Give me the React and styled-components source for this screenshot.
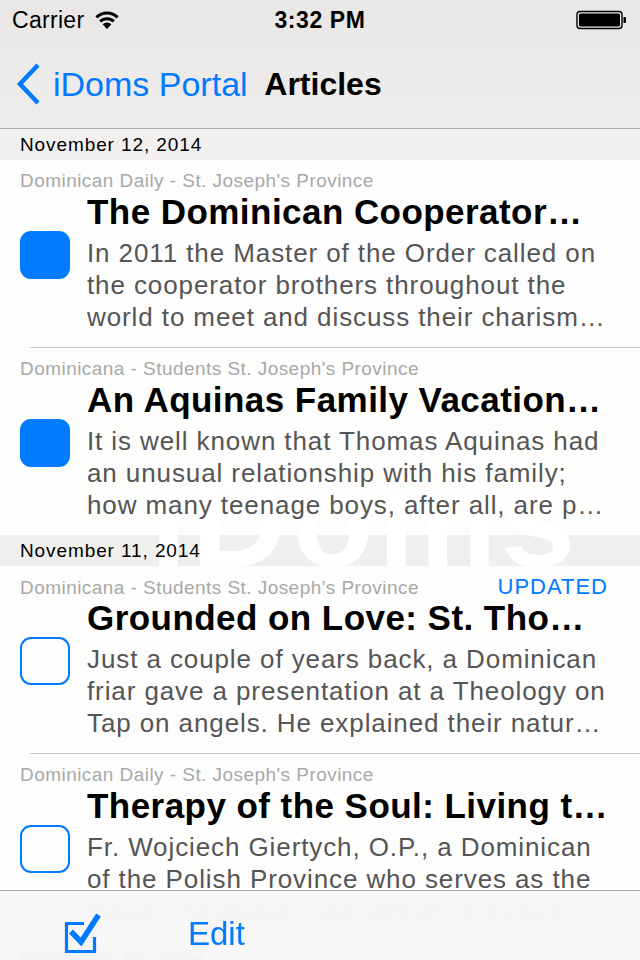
import React from "react";
import styled, { createGlobalStyle } from "styled-components";

const Global = createGlobalStyle`
  html, body { margin: 0; padding: 0; }
  body {
    width: 640px;
    height: 960px;
    overflow: hidden;
    font-family: "Liberation Sans", Arial, Helvetica, sans-serif;
    -webkit-font-smoothing: antialiased;
  }
`;

const BLUE = "#007aff";

const Screen = styled.div`
  position: relative;
  width: 640px;
  height: 960px;
  overflow: hidden;
  background: linear-gradient(180deg, #e9e8e6 0%, #e5e4e2 40%, #e3e3e3 100%);
  display: flex;
  flex-direction: column;
`;

const Watermark = styled.div`
  position: absolute;
  left: 150px;
  top: 453px;
  font-size: 134px;
  font-weight: 700;
  letter-spacing: 4px;
  color: #ffffff;
  line-height: 1;
  z-index: 0;
  pointer-events: none;
`;

const Header = styled.header`
  position: relative;
  z-index: 2;
  background: linear-gradient(180deg, #e8e7e5 0%, #ecebe9 60%, #eeedeb 100%);
  border-bottom: 1px solid #a9a9a9;
`;

const StatusBar = styled.div`
  height: 40px;
  display: grid;
  grid-template-columns: 1fr auto 1fr;
  align-items: center;
  padding: 0 12px;
`;

const Carrier = styled.div`
  display: flex;
  align-items: center;
  gap: 10px;
  font-size: 23px;
  letter-spacing: 0.3px;
  color: #000;
`;

const Time = styled.div`
  font-size: 23px;
  font-weight: 700;
  letter-spacing: 0.6px;
  color: #000;
`;

const BatteryWrap = styled.div`
  display: flex;
  justify-content: flex-end;
`;

const NavBar = styled.div`
  height: 88px;
  display: grid;
  grid-template-columns: 1fr auto 1fr;
  align-items: center;
`;

const Back = styled.div`
  display: flex;
  align-items: center;
  gap: 12px;
  padding-left: 15px;
  color: ${BLUE};
  font-size: 34px;
  white-space: nowrap;
`;

const NavTitle = styled.div`
  font-size: 32px;
  font-weight: 700;
  color: #000;
  padding-left: 6px;
`;

const List = styled.div`
  position: relative;
  z-index: 1;
  display: flex;
  flex-direction: column;
`;

const SectionHeader = styled.div`
  height: 31px;
  line-height: 31px;
  padding-left: 20px;
  font-size: 19px;
  letter-spacing: 0.9px;
  color: #000;
  background: rgba(255, 255, 255, 0.42);
`;

const Row = styled.div`
  display: grid;
  grid-template-columns: 50px 1fr;
  grid-template-rows: auto auto auto;
  column-gap: 17px;
  padding: 10px 24px 14px 20px;
  height: 187px;
  box-sizing: border-box;
  background: rgba(255, 255, 255, 0.9);
`;

const SourceLine = styled.div`
  grid-column: 1 / -1;
  grid-row: 1;
  display: flex;
  justify-content: space-between;
  align-items: baseline;
  height: 22px;
  line-height: 22px;
  padding-right: 8px;
`;

const Source = styled.span`
  font-size: 19px;
  letter-spacing: 0.45px;
  color: #a8a8a8;
`;

const Updated = styled.span`
  font-size: 22px;
  color: ${BLUE};
  letter-spacing: 1px;
`;

const Check = styled.div`
  grid-column: 1;
  grid-row: 1 / 4;
  align-self: center;
  width: 50px;
  height: 48px;
  box-sizing: border-box;
  border-radius: 11px;
  margin-top: 6px;
  background: ${(p) => (p.$checked ? BLUE : "transparent")};
  border: 2px solid ${BLUE};
`;

const Title = styled.div`
  grid-column: 2;
  grid-row: 2;
  font-size: 35px;
  font-weight: 700;
  letter-spacing: 0.45px;
  color: #000;
  line-height: 40px;
  white-space: nowrap;
  overflow: hidden;
  text-overflow: ellipsis;
`;

const Body = styled.div`
  grid-column: 2;
  grid-row: 3;
  margin-top: 5px;
  font-size: 26px;
  letter-spacing: 0.9px;
  line-height: 32px;
  color: #555555;
  display: -webkit-box;
  -webkit-line-clamp: 3;
  -webkit-box-orient: vertical;
  overflow: hidden;
`;

const Divider = styled.div`
  height: 1px;
  background: linear-gradient(
    to right,
    rgba(255, 255, 255, 0.9) 30px,
    #c8c7cc 30px
  );
`;

const Toolbar = styled.div`
  position: absolute;
  left: 0;
  right: 0;
  bottom: 0;
  height: 70px;
  box-sizing: border-box;
  z-index: 3;
  border-top: 1px solid #a9a9a9;
  background: rgba(247, 247, 247, 0.96);
  backdrop-filter: blur(3px);
  display: flex;
  align-items: center;
  gap: 86px;
  padding: 16px 0 0 60px;
`;

const EditButton = styled.span`
  font-size: 33px;
  color: ${BLUE};
`;

const Wifi = () => (
  <svg width="26" height="20" viewBox="0 0 26 20">
    <path d="M13 19 L8.6 14.2 A6.4 6.4 0 0 1 17.4 14.2 Z" fill="#000" />
    <path d="M6.2 11.4 A9.8 9.8 0 0 1 19.8 11.4" stroke="#000" strokeWidth="3" fill="none" />
    <path d="M2.4 7.4 A15 15 0 0 1 23.6 7.4" stroke="#000" strokeWidth="3" fill="none" />
  </svg>
);

const Battery = () => (
  <svg width="52" height="20" viewBox="0 0 52 20">
    <rect x="1" y="1.5" width="45" height="17" rx="3" fill="none" stroke="#000" strokeWidth="1.4" />
    <rect x="3" y="3.5" width="41" height="13" rx="1.5" fill="#000" />
    <path d="M47.5 7 h1.5 a1 1 0 0 1 1 1 v4 a1 1 0 0 1 -1 1 h-1.5 Z" fill="#000" />
  </svg>
);

const Chevron = () => (
  <svg width="26" height="42" viewBox="0 0 26 42">
    <polyline points="23,2 5,21 23,40" fill="none" stroke={BLUE} strokeWidth="4.5" />
  </svg>
);

const CheckAllIcon = () => (
  <svg width="42" height="46" viewBox="0 0 42 46">
    <path d="M24 12.5 H6.5 V40.5 H34.5 V26" fill="none" stroke={BLUE} strokeWidth="3.2" />
    <path d="M11 20.5 L21 31 L38.5 4" fill="none" stroke={BLUE} strokeWidth="5.5" />
  </svg>
);

const sections = [
  {
    date: "November 12, 2014",
    items: [
      {
        source: "Dominican Daily - St. Joseph's Province",
        title: "The Dominican Cooperator…",
        body:
          "In 2011 the Master of the Order called on the cooperator brothers throughout the world to meet and discuss their charism…",
        checked: true,
      },
      {
        source: "Dominicana - Students St. Joseph's Province",
        title: "An Aquinas Family Vacation…",
        body:
          "It is well known that Thomas Aquinas had an unusual relationship with his family; how many teenage boys, after all, are p…",
        checked: true,
      },
    ],
  },
  {
    date: "November 11, 2014",
    items: [
      {
        source: "Dominicana - Students St. Joseph's Province",
        title: "Grounded on Love: St. Tho…",
        body:
          "Just a couple of years back, a Dominican friar gave a presentation at a Theology on Tap on angels. He explained their natur…",
        checked: false,
        updated: true,
      },
      {
        source: "Dominican Daily - St. Joseph's Province",
        title: "Therapy of the Soul: Living t…",
        body:
          "Fr. Wojciech Giertych, O.P., a Dominican of the Polish Province who serves as the Papal Theologian, will deliver a lecture…",
        checked: false,
      },
    ],
  },
  {
    date: "November 10, 2014",
    items: [],
  },
];

export default function App() {
  return (
    <>
      <Global />
      <Screen>
        <Watermark>iDoms</Watermark>
        <Header>
          <StatusBar>
            <Carrier>
              Carrier <Wifi />
            </Carrier>
            <Time>3:32 PM</Time>
            <BatteryWrap>
              <Battery />
            </BatteryWrap>
          </StatusBar>
          <NavBar>
            <Back>
              <Chevron />
              iDoms Portal
            </Back>
            <NavTitle>Articles</NavTitle>
            <div />
          </NavBar>
        </Header>
        <List>
          {sections.map((s) => (
            <React.Fragment key={s.date}>
              <SectionHeader>{s.date}</SectionHeader>
              {s.items.map((it, i) => (
                <React.Fragment key={it.title}>
                  {i > 0 && <Divider />}
                  <Row>
                    <SourceLine>
                      <Source>{it.source}</Source>
                      {it.updated && <Updated>UPDATED</Updated>}
                    </SourceLine>
                    <Check $checked={it.checked} />
                    <Title>{it.title}</Title>
                    <Body>{it.body}</Body>
                  </Row>
                </React.Fragment>
              ))}
            </React.Fragment>
          ))}
        </List>
        <Toolbar>
          <CheckAllIcon />
          <EditButton>Edit</EditButton>
        </Toolbar>
      </Screen>
    </>
  );
}
